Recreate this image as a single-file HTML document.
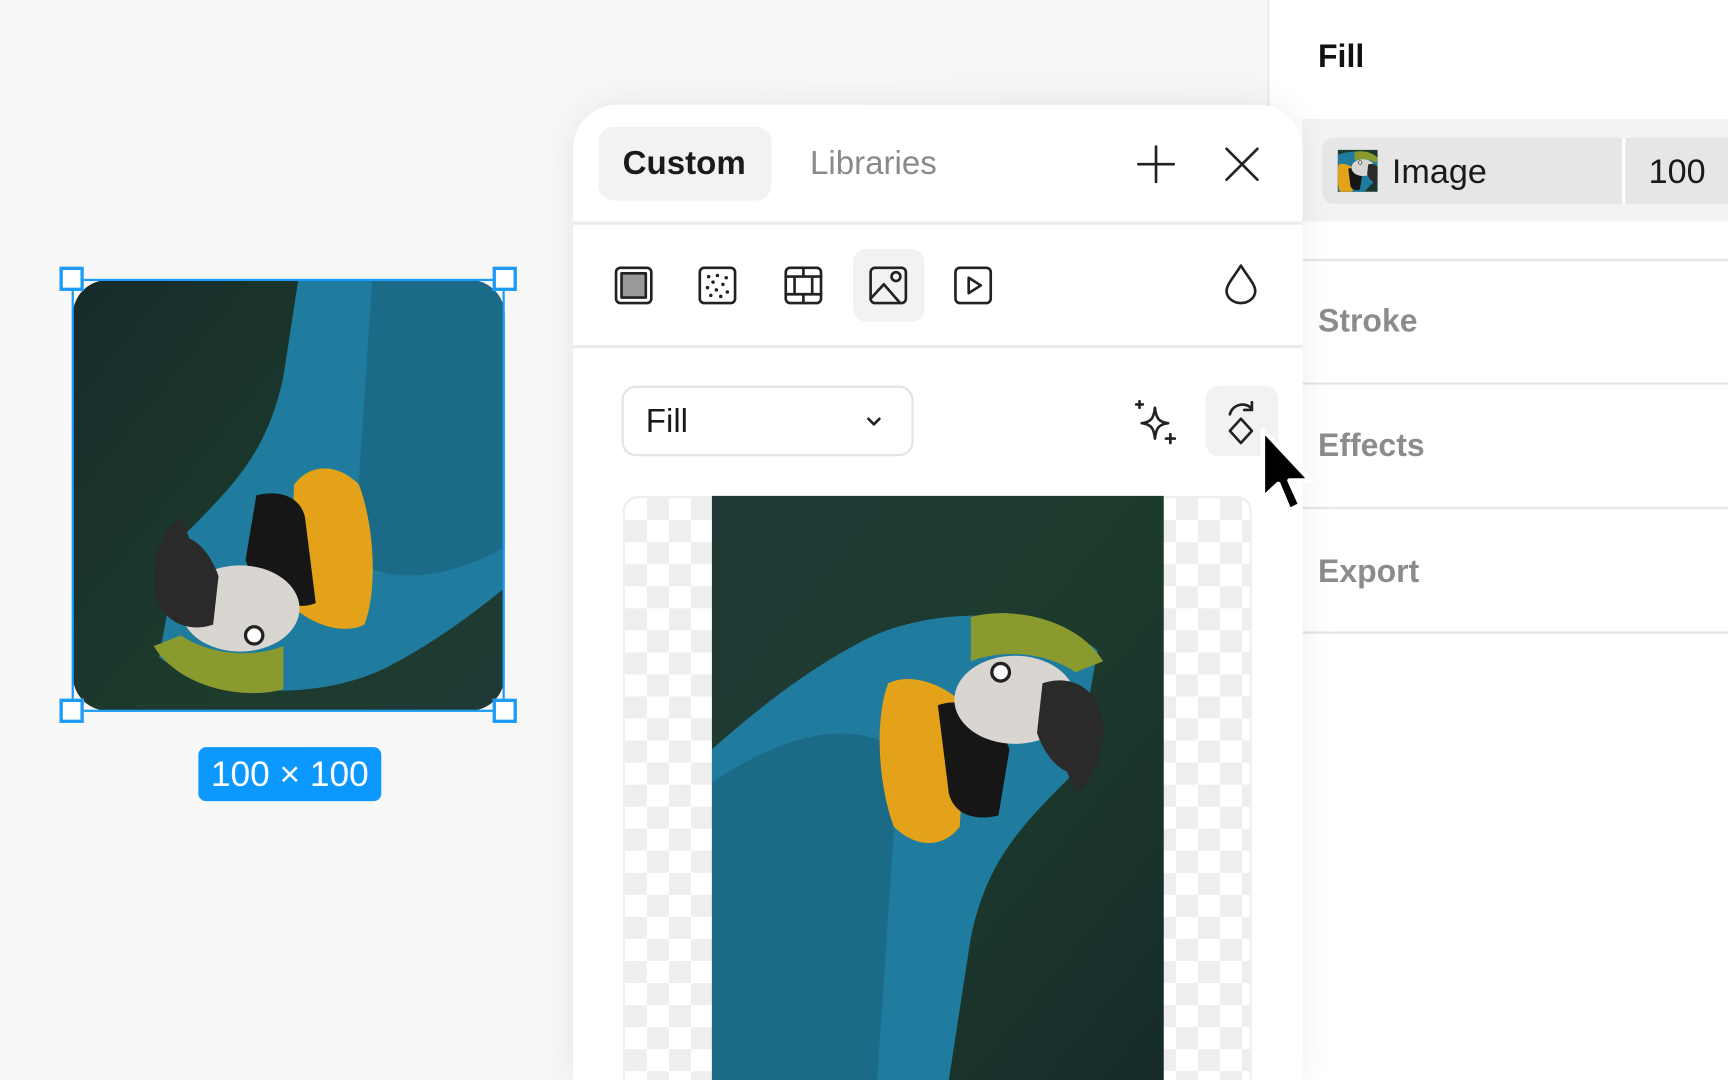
<!DOCTYPE html>
<html><head><meta charset="utf-8"><style>
*{margin:0;padding:0;box-sizing:border-box}
html,body{width:1728px;height:1080px;overflow:hidden;background:#f7f7f7}
#s{position:absolute;left:0;top:0;width:1568px;height:980px;overflow:hidden;transform:scale(1.10204);transform-origin:0 0;font-family:"Liberation Sans",sans-serif;background:linear-gradient(90deg,#f8f8f8,#f5f5f5)}
.abs{position:absolute}
.rp{left:1150px;top:0;width:418px;height:980px;background:#fff;border-left:2px solid #ececec}
.lbl{position:absolute;left:1196px;font-size:29px;font-weight:bold;color:#8c8c8c}
.hl{position:absolute;left:1182px;width:386px;height:2px;background:#e6e6e6}
.pop{left:520px;top:95px;width:662px;height:885px;background:#fff;border-radius:40px 40px 0 0;box-shadow:0 0 30px rgba(0,0,0,.07)}
svg.ic{position:absolute;fill:none;stroke:#222;stroke-width:2.4;stroke-linejoin:round;stroke-linecap:round}
</style></head><body><div id="s">
<svg width="0" height="0" style="position:absolute"><defs>
<linearGradient id="bg" x1="0" y1="0" x2="1" y2="1"><stop offset="0" stop-color="#213a3a"/><stop offset=".5" stop-color="#1d3b2c"/><stop offset="1" stop-color="#14262a"/></linearGradient>
<g id="par">
<rect x="-50" y="-50" width="520" height="640" fill="url(#bg)"/>
<path d="M140 130C200 100 300 100 350 140L330 250C280 300 250 330 235 400L215 530L0 530L0 230C50 185 100 150 140 130Z" fill="#1f7c9e"/>
<path d="M0 260C60 220 120 200 170 230L150 530L0 530Z" fill="#1b6a88"/>
<path d="M160 170C180 160 210 170 230 190L225 300C210 320 185 320 165 300C150 260 148 200 160 170Z" fill="#e3a21a"/>
<path d="M205 190C230 180 260 200 270 230L260 290C240 295 220 290 215 270Z" fill="#161616"/>
<path d="M235 110C270 100 330 110 355 150L330 160C300 140 260 140 235 150Z" fill="#8a9a2e"/>
<ellipse cx="275" cy="185" rx="55" ry="40" fill="#d9d6d2"/>
<circle cx="262" cy="160" r="8" fill="#fff" stroke="#222" stroke-width="3"/>
<path d="M300 170C330 160 355 180 355 210C355 240 345 260 330 270L322 250C310 245 300 230 295 215Z" fill="#2a2a2a"/>
</g></defs></svg>

<div class="abs rp"></div>
<div class="abs" style="left:1196px;top:36px;font-size:29px;font-weight:bold;color:#111">Fill</div>
<div class="abs" style="left:1182px;top:108px;width:386px;height:93px;background:#f3f3f3"></div>
<div class="abs" style="left:1200px;top:125px;width:368px;height:60px;background:#e6e6e6;border-radius:10px 0 0 10px"></div>
<div class="abs" style="left:1472px;top:125px;width:3px;height:60px;background:#fff"></div>
<svg class="abs" style="left:1214px;top:136px" width="36" height="38" viewBox="150 100 200 200" preserveAspectRatio="xMidYMid slice"><use href="#par"/></svg>
<div class="abs" style="left:1263px;top:138px;font-size:31px;color:#1a1a1a">Image</div>
<div class="abs" style="left:1496px;top:138px;font-size:31px;color:#1a1a1a">100</div>
<div class="hl" style="top:235px"></div>
<div class="lbl" style="top:276px">Stroke</div>
<div class="hl" style="top:347px"></div>
<div class="lbl" style="top:389px">Effects</div>
<div class="hl" style="top:460px"></div>
<div class="lbl" style="top:503px">Export</div>
<div class="hl" style="top:573px"></div>

<div class="abs" style="left:66px;top:254px;width:392px;height:391px;border-radius:32px;overflow:hidden">
<svg width="392" height="391" viewBox="30 90 400 400" preserveAspectRatio="none" style="transform:rotate(180deg)"><use href="#par"/></svg></div>
<div class="abs" style="left:65px;top:253px;width:393px;height:393px;border:2px solid #1b9af7"></div>
<div class="abs" style="left:54px;top:242px;width:22px;height:22px;border:3px solid #1b9af7;background:#fff"></div>
<div class="abs" style="left:447px;top:242px;width:22px;height:22px;border:3px solid #1b9af7;background:#fff"></div>
<div class="abs" style="left:54px;top:634px;width:22px;height:22px;border:3px solid #1b9af7;background:#fff"></div>
<div class="abs" style="left:447px;top:634px;width:22px;height:22px;border:3px solid #1b9af7;background:#fff"></div>
<div class="abs" style="left:180px;top:678px;width:166px;height:49px;background:#0c99ff;border-radius:7px;color:#fff;font-size:32px;text-align:center;line-height:49px">100 × 100</div>

<div class="abs pop"></div>
<div class="abs" style="left:543px;top:115px;width:157px;height:67px;background:#f2f2f2;border-radius:14px"></div>
<div class="abs" style="left:565px;top:132px;font-size:30px;font-weight:bold;color:#1a1a1a">Custom</div>
<div class="abs" style="left:735px;top:132px;font-size:30px;color:#8a8a8a">Libraries</div>
<svg class="ic" style="left:1030px;top:130px" width="38" height="38" viewBox="0 0 38 38"><path d="M19 3V35M3 19H35"/></svg>
<svg class="ic" style="left:1110px;top:132px" width="34" height="34" viewBox="0 0 34 34"><path d="M3 3L31 31M31 3L3 31"/></svg>
<div class="abs" style="left:520px;top:201px;width:662px;height:3px;background:#ececec"></div>
<div class="abs" style="left:774px;top:226px;width:65px;height:66px;background:#f2f2f2;border-radius:12px"></div>
<svg class="ic" style="left:557px;top:241px" width="36" height="36" viewBox="0 0 36 36"><rect x="2" y="2" width="32" height="32" rx="4"/><rect x="7" y="7" width="22" height="22" fill="#999"/></svg>
<svg class="ic" style="left:633px;top:241px" width="36" height="36" viewBox="0 0 36 36"><rect x="2" y="2" width="32" height="32" rx="4"/><g fill="#222" stroke="none"><circle cx="10" cy="10" r="1.6"/><circle cx="18" cy="9" r="1.6"/><circle cx="26" cy="11" r="1.6"/><circle cx="14" cy="15" r="1.6"/><circle cx="23" cy="17" r="1.6"/><circle cx="9" cy="20" r="1.6"/><circle cx="17" cy="22" r="1.6"/><circle cx="27" cy="24" r="1.6"/><circle cx="12" cy="27" r="1.6"/><circle cx="21" cy="28" r="1.6"/></g></svg>
<svg class="ic" style="left:711px;top:241px" width="36" height="36" viewBox="0 0 36 36"><rect x="2" y="2" width="32" height="32" rx="4"/><path d="M2 10H34M2 26H34M10 10V26M26 10V26M18 2V10M18 26V34"/></svg>
<svg class="ic" style="left:788px;top:241px" width="36" height="36" viewBox="0 0 36 36"><rect x="2" y="2" width="32" height="32" rx="4"/><path d="M2 30L14 17L28 33"/><circle cx="25" cy="10" r="4"/></svg>
<svg class="ic" style="left:865px;top:241px" width="36" height="36" viewBox="0 0 36 36"><rect x="2" y="2" width="32" height="32" rx="4"/><path d="M14 11V25L25 18Z"/></svg>
<svg class="ic" style="left:1110px;top:239px" width="32" height="38" viewBox="0 0 32 38"><path d="M16 2C10 12 3 19 3 25A13 11 0 0 0 29 25C29 19 22 12 16 2Z"/></svg>
<div class="abs" style="left:520px;top:313px;width:662px;height:3px;background:#ececec"></div>
<div class="abs" style="left:564px;top:350px;width:265px;height:64px;border:2px solid #e4e4e4;border-radius:13px"></div>
<div class="abs" style="left:586px;top:366px;font-size:30px;color:#1a1a1a">Fill</div>
<svg class="ic" style="left:785px;top:377px" width="16" height="12" viewBox="0 0 16 12"><path d="M3 3L8 8L13 3"/></svg>
<svg class="ic" style="left:1028px;top:362px" width="42" height="42" viewBox="0 0 42 42"><path d="M20 8C21 18 24 21 32 22C24 23 21 26 20 36C19 26 16 23 8 22C16 21 19 18 20 8Z"/><path d="M6 2V8M3 5H9M34 32V40M30 36H38"/></svg>
<div class="abs" style="left:1094px;top:350px;width:66px;height:64px;background:#f2f2f2;border-radius:12px"></div>
<svg class="ic" style="left:1108px;top:360px" width="40" height="46" viewBox="0 0 40 46"><path d="M18 20L28 31L18 42L8 31Z"/><path d="M8 16C10 7 22 4 28 11M28 5V12H21"/></svg>
<div class="abs" style="left:565px;top:450px;width:571px;height:530px;border:2px solid #eee;border-bottom:0;border-radius:14px 14px 0 0;overflow:hidden;background-color:#fff;background-image:linear-gradient(45deg,#eee 25%,transparent 25%,transparent 75%,#eee 75%),linear-gradient(45deg,#eee 25%,transparent 25%,transparent 75%,#eee 75%);background-size:40px 40px;background-position:0 0,20px 20px"></div>
<svg class="abs" style="left:646px;top:450px" width="410" height="530" viewBox="0 0 410 530"><use href="#par"/></svg>
<svg class="abs" style="left:1140px;top:386px" width="56" height="84" viewBox="0 0 56 84"><path d="M6 4V66L20 53L30 77L40 72L30 50H49Z" fill="#000" stroke="#fff" stroke-width="4" stroke-linejoin="round"/></svg>
</div></body></html>
